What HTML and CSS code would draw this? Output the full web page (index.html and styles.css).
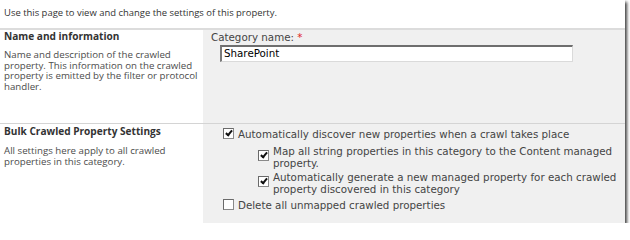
FILE: index.html
```html
<!DOCTYPE html>
<html>
<head>
<meta charset="utf-8">
<link rel="stylesheet" href="styles.css">
</head>
<body>
<div class="frame">
  <div class="intro">Use this page to view and change the settings of this property.</div>
  <div class="section first">
    <div class="desc-col">
      <div class="heading">Name and information</div>
      <div class="desc">Name and description of the crawled property. This information on the crawled property is emitted by the filter or protocol handler.</div>
    </div>
    <div class="ctrl-col">
      <div class="label">Category name: <span class="req">*</span></div>
      <div class="input">SharePoint</div>
    </div>
  </div>
  <div class="section second">
    <div class="desc-col">
      <div class="heading">Bulk Crawled Property Settings</div>
      <div class="desc">All settings here apply to all crawled properties in this category.</div>
    </div>
    <div class="ctrl-col opts">
      <div class="opt o1"><span class="cb checked"></span><span class="opt-text">Automatically discover new properties when a crawl takes place</span></div>
      <div class="opt sub o2"><span class="cb checked"></span><span class="opt-text">Map all string properties in this category to the Content managed property.</span></div>
      <div class="opt sub o3"><span class="cb checked"></span><span class="opt-text">Automatically generate a new managed property for each crawled property discovered in this category</span></div>
      <div class="opt o4"><span class="cb"></span><span class="opt-text">Delete all unmapped crawled properties</span></div>
    </div>
  </div>
</div>
</body>
</html>
```

FILE: styles.css
```css
html, body {
  margin: 0;
  padding: 0;
  background: #ffffff;
}
.frame {
  width: 625px;
  height: 223px;
  background: #ffffff;
  overflow: hidden;
  box-shadow: 2px 2px 3px rgba(0, 0, 0, 0.75);
  font-family: "Open Sans", "Noto Sans", sans-serif;
}
.intro {
  height: 28px;
  box-sizing: border-box;
  padding: 6px 0 0 4px;
  font-size: 9.45px;
  line-height: 13px;
  color: #333333;
}
.section {
  display: grid;
  grid-template-columns: 203px 1fr;
}
.section.first {
  border-top: 2px solid #dcdcdc;
  height: 93px;
}
.section.second {
  border-top: 1px solid #d4d4d4;
  height: 101px;
}
.desc-col {
  padding: 0 4px;
}
.second .desc-col {
  padding-top: 1px;
}
.heading {
  font-weight: 700;
  font-size: 10.1px;
  line-height: 13px;
  color: #333333;
}
.desc {
  font-size: 9.7px;
  line-height: 10.7px;
  color: #4c4c4c;
}
.first .desc {
  margin-top: 7px;
}
.second .desc {
  margin-top: 8px;
}
.ctrl-col {
  background: #f0f0f0;
  font-family: "DejaVu Sans", "Verdana", sans-serif;
  font-size: 10.3px;
  color: #444444;
  padding-right: 6px;
}
.label {
  padding: 1px 0 0 8px;
  line-height: 13px;
}
.req {
  color: #e02020;
}
.input {
  margin: 1px 0 0 17px;
  width: 353px;
  height: 17px;
  box-sizing: border-box;
  border-style: solid;
  border-width: 2px 1px 1px 2px;
  border-color: #6e6e6e #dadada #dadada #7a7a7a;
  background: #ffffff;
  color: #000000;
  line-height: 13px;
  padding-left: 2px;
}
.opts {
  padding-top: 4px;
}
.opt {
  display: flex;
  align-items: flex-start;
  line-height: 12px;
  padding-left: 20px;
}
.opt.sub {
  padding-left: 55px;
}
.o2 { margin-top: 5px; }
.o3 { margin-top: 2px; }
.o4 { margin-top: 4px; }
.cb {
  flex: none;
  width: 11px;
  height: 11px;
  box-sizing: border-box;
  border: 1px solid #8a8a8a;
  border-top-color: #6a6a6a;
  border-left-color: #6a6a6a;
  background: #ffffff;
  margin-right: 4px;
  position: relative;
}
.sub .cb {
  margin-top: 5px;
}
.cb.checked::after {
  content: "";
  position: absolute;
  left: 3px;
  top: 0px;
  width: 2px;
  height: 5px;
  border-right: 2px solid #111111;
  border-bottom: 2px solid #111111;
  transform: rotate(40deg);
}
.opt-text {
  display: block;
}
```
